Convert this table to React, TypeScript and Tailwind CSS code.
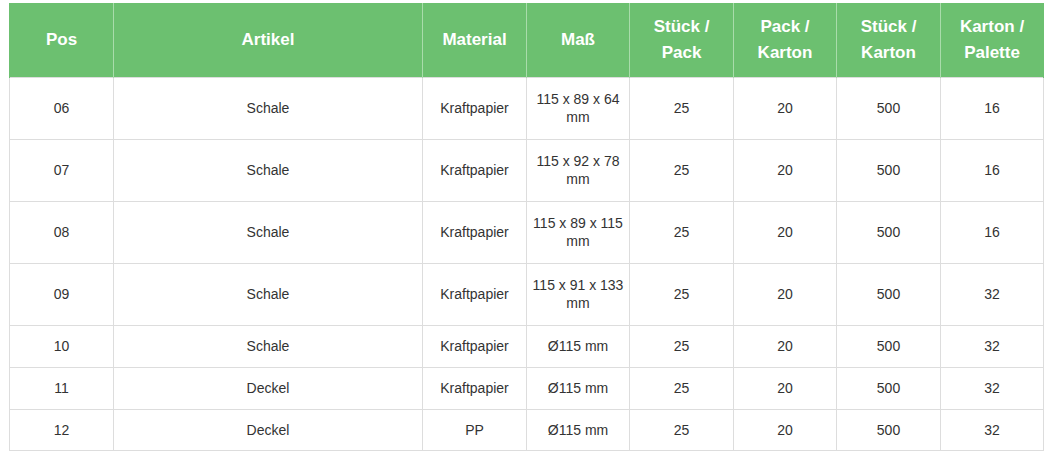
const headers = [
  ["Pos"],
  ["Artikel"],
  ["Material"],
  ["Maß"],
  ["Stück /", "Pack"],
  ["Pack /", "Karton"],
  ["Stück /", "Karton"],
  ["Karton /", "Palette"],
];

const widths = ["w-[104px]", "w-[309px]", "w-[104px]", "w-[103px]", "w-[104px]", "w-[103px]", "w-[104px]", "w-[103px]"];

const rows = [
  { h: "h-[62px]", cells: ["06", "Schale", "Kraftpapier", ["115 x 89 x 64", "mm"], "25", "20", "500", "16"] },
  { h: "h-[62px]", cells: ["07", "Schale", "Kraftpapier", ["115 x 92 x 78", "mm"], "25", "20", "500", "16"] },
  { h: "h-[62px]", cells: ["08", "Schale", "Kraftpapier", ["115 x 89 x 115", "mm"], "25", "20", "500", "16"] },
  { h: "h-[62px]", cells: ["09", "Schale", "Kraftpapier", ["115 x 91 x 133", "mm"], "25", "20", "500", "32"] },
  { h: "h-[42px]", cells: ["10", "Schale", "Kraftpapier", "Ø115 mm", "25", "20", "500", "32"] },
  { h: "h-[42px]", cells: ["11", "Deckel", "Kraftpapier", "Ø115 mm", "25", "20", "500", "32"] },
  { h: "h-[41px]", cells: ["12", "Deckel", "PP", "Ø115 mm", "25", "20", "500", "32"] },
];

export default function App() {
  return (
    <div className="min-h-screen bg-white pl-[9px] pt-[3px] font-['Liberation_Sans',Arial,sans-serif]">
      <table className="w-[1034px] table-fixed border-collapse">
        <thead>
          <tr className="h-[74px] bg-[#6cc070]">
            {headers.map((lines, i) => (
              <th
                key={i}
                className={`${widths[i]} border-x border-[#a9dcab] px-1 text-center align-middle text-[17px] leading-[26px] font-bold text-white first:border-l-[#6cc070] last:border-r-[#6cc070]`}
              >
                {lines.map((l, j) => (
                  <div key={j}>{l}</div>
                ))}
              </th>
            ))}
          </tr>
        </thead>
        <tbody>
          {rows.map((row, r) => (
            <tr key={r} className={row.h}>
              {row.cells.map((c, i) => (
                <td
                  key={i}
                  className="border border-[#dddddd] px-1 text-center align-middle text-[14px] leading-[18px] text-[#333333]"
                >
                  {Array.isArray(c) ? c.map((l, j) => <div key={j}>{l}</div>) : c}
                </td>
              ))}
            </tr>
          ))}
        </tbody>
      </table>
    </div>
  );
}
